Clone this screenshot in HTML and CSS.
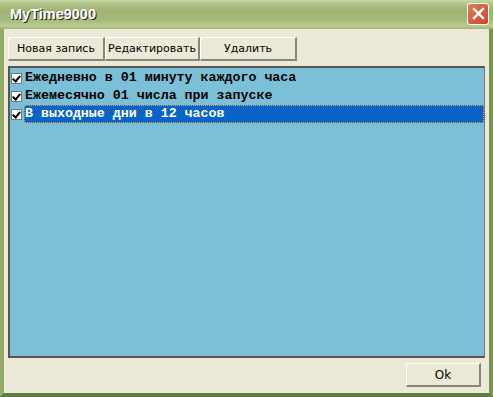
FILE: index.html
```html
<!DOCTYPE html>
<html lang="ru">
<head>
    <meta charset="UTF-8">
    <title>MyTime9000</title>
    <link rel="stylesheet" href="styles.css">
</head>
<body>
  <div class="window">
    <div class="titlebar">
      <span class="title">MyTime9000</span>
      <button class="close" type="button">
        <svg width="13" height="13" viewBox="0 0 13 13">
          <path d="M2 2 L11 11 M11 2 L2 11" stroke="#fff" stroke-width="2.4" stroke-linecap="square"/>
        </svg>
      </button>
    </div>
    <div class="client">
      <div class="toolbar">
        <button class="btn w96" type="button">Новая запись</button>
        <button class="btn w95" type="button">Редактировать</button>
        <button class="btn w97" type="button">Удалить</button>
      </div>
      <div class="list">
        <div class="row"><span class="check"></span><span class="label">Ежедневно в 01 минуту каждого часа</span></div>
        <div class="row"><span class="check"></span><span class="label">Ежемесячно 01 числа при запуске</span></div>
        <div class="row selected"><span class="check"></span><span class="label">В выходные дни в 12 часов</span></div>
      </div>
      <div class="footer">
        <button class="btn ok" type="button">Ok</button>
      </div>
    </div>
  </div>
</body>
</html>
```

FILE: styles.css
```css
body {
    margin: 0;
    padding: 0;
    background-color: #6f8c4c;
}
.window {
    width: 493px;
    height: 397px;
    box-sizing: border-box;
    display: flex;
    flex-direction: column;
    background: #a8bd7c;
    border-left: 4px solid #94ab68;
    border-right: 4px solid #7a9456;
    border-bottom: 4px solid #5f7d44;
}
.titlebar {
    height: 29px;
    margin: 0 -4px;
    padding: 0 4px 0 10px;
    display: flex;
    align-items: center;
    justify-content: space-between;
    background: linear-gradient(#cbd8a5 0, #b4c78d 3px, #9fb474 10px, #a5ba7a 20px, #bccd94 26px, #9fb474 29px);
}
.title {
    font-family: "Liberation Sans", sans-serif;
    font-weight: bold;
    font-size: 14.5px;
    color: #fff;
    text-shadow: 1px 1px 0 #222;
    margin-top: -2px;
}
.close {
    width: 22px;
    height: 22px;
    padding: 0;
    margin-top: -2px;
    border: 1px solid #fff;
    border-radius: 3px;
    background: linear-gradient(135deg, #e07a5c, #c8472a);
    display: flex;
    align-items: center;
    justify-content: center;
}
.client {
    flex: 1;
    background: #ece9d8;
    display: flex;
    flex-direction: column;
    padding: 8px 4px 6px 4px;
}
.toolbar {
    display: flex;
}
.btn {
    height: 24px;
    font-family: "DejaVu Sans", sans-serif;
    font-size: 11px;
    color: #000;
    background: #ece9d8;
    border-top: 1px solid #fff;
    border-left: 1px solid #fff;
    border-right: 2px solid #8a877a;
    border-bottom: 2px solid #8a877a;
    padding: 0;
}
.w96 { width: 97px; }
.w95 { width: 95px; }
.w97 { width: 97px; }
.list {
    margin-top: 5px;
    height: 292px;
    box-sizing: border-box;
    background: #7cc0d8;
    border-top: 2px solid #555;
    border-left: 2px solid #555;
    border-right: 1px solid #777;
    border-bottom: 2px solid #555;
    padding-top: 1px;
}
.row {
    height: 18px;
    display: flex;
    align-items: center;
    padding-left: 1px;
}
.check {
    width: 9px;
    height: 9px;
    background: #fff;
    border: 1px solid #777;
    margin-right: 2px;
    position: relative;
}
.check::after {
    content: "";
    position: absolute;
    left: 2px;
    top: 0px;
    width: 3px;
    height: 6px;
    border-right: 2px solid #000;
    border-bottom: 2px solid #000;
    transform: rotate(40deg);
}
.label {
    flex: 1;
    height: 18px;
    line-height: 18px;
    font-family: "Liberation Mono", monospace;
    font-weight: bold;
    font-size: 13.3px;
    color: #000;
    padding-left: 1px;
    box-sizing: border-box;
}
.selected .label {
    background: #0a64c8;
    color: #fff;
    outline: 1px dotted #e8a040;
    outline-offset: -1px;
}
.footer {
    flex: 1;
    display: flex;
    justify-content: flex-end;
    align-items: flex-end;
    padding-right: 4px;
}
.ok {
    width: 75px;
    height: 24px;
    font-size: 12px;
}
```
